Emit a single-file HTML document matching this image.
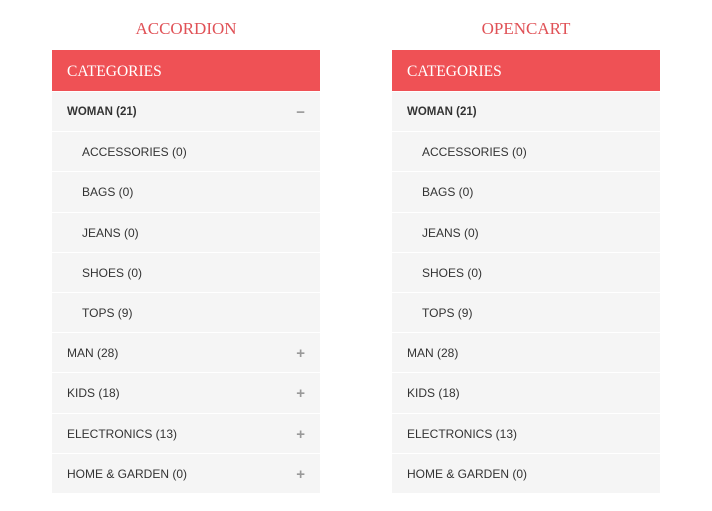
<!DOCTYPE html>
<html><head><style>
body{margin:0;width:712px;height:511px;background:#fff;position:relative;font-family:"Liberation Sans",sans-serif;overflow:hidden}
.t{position:absolute;top:19px;width:268px;text-align:center;font-family:"Liberation Serif",serif;font-size:17px;color:#e05257}
.p{position:absolute;top:50px;width:268px}
.h{height:41px;background:#ef5155;color:#fff;font-family:"Liberation Serif",serif;font-size:15.5px;line-height:43px;padding-left:15px}
.r{position:relative;height:39.2px;margin-top:1px;background:#f5f5f5;font-size:12px;color:#333;line-height:41px;padding-left:15px}
.r:first-of-type{margin-top:0;height:40.2px}
.s{padding-left:30px}
.b{font-weight:bold;font-size:11.5px}
.i{position:absolute;right:15px;top:0;color:#999;font-size:15px;font-weight:bold}
</style></head><body>
<div class="t" style="left:52px">ACCORDION</div>
<div class="t" style="left:392px">OPENCART</div>
<div class="p" style="left:52px">
<div class="h">CATEGORIES</div>
<div class="r b">WOMAN (21)<span class="i">−</span></div>
<div class="r s">ACCESSORIES (0)</div>
<div class="r s">BAGS (0)</div>
<div class="r s">JEANS (0)</div>
<div class="r s">SHOES (0)</div>
<div class="r s">TOPS (9)</div>
<div class="r">MAN (28)<span class="i">+</span></div>
<div class="r">KIDS (18)<span class="i">+</span></div>
<div class="r">ELECTRONICS (13)<span class="i">+</span></div>
<div class="r">HOME &amp; GARDEN (0)<span class="i">+</span></div>
</div>
<div class="p" style="left:392px">
<div class="h">CATEGORIES</div>
<div class="r b">WOMAN (21)</div>
<div class="r s">ACCESSORIES (0)</div>
<div class="r s">BAGS (0)</div>
<div class="r s">JEANS (0)</div>
<div class="r s">SHOES (0)</div>
<div class="r s">TOPS (9)</div>
<div class="r">MAN (28)</div>
<div class="r">KIDS (18)</div>
<div class="r">ELECTRONICS (13)</div>
<div class="r">HOME &amp; GARDEN (0)</div>
</div>
</body></html>
